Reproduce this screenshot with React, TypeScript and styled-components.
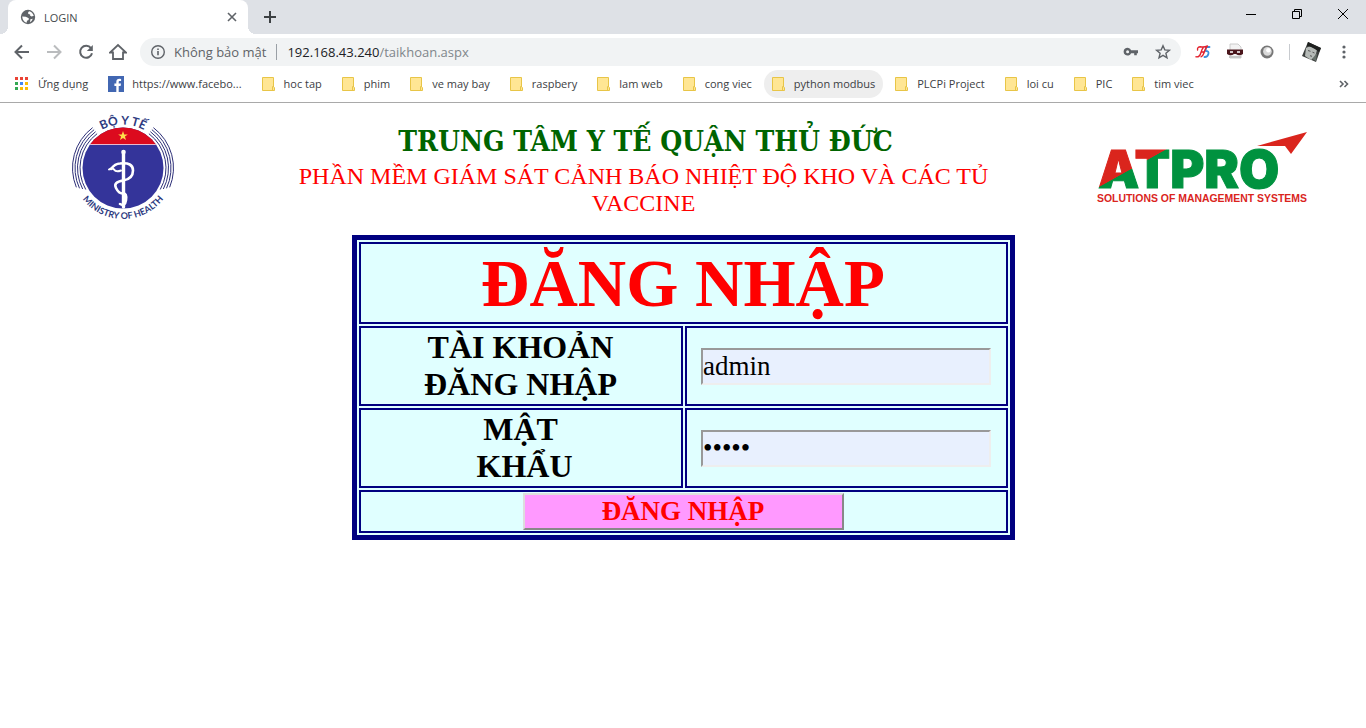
import React, { useState } from "react";
import styled, { createGlobalStyle } from "styled-components";

const UI_FONT = `"Open Sans", "Noto Sans", sans-serif`;
const SERIF = `"Liberation Serif", "Times New Roman", serif`;

const GlobalStyle = createGlobalStyle`
  *, *::before, *::after { box-sizing: border-box; }
  body { margin: 0; background: #fff; font-family: ${SERIF}; }
  button { font: inherit; color: inherit; border: 0; padding: 0; background: none; }
`;

/* ---------- browser frame ---------- */

const TabStrip = styled.div`
  display: flex;
  height: 34px;
  padding-left: 8px;
  background: #dee1e6;
  font-family: ${UI_FONT};
`;

const Tab = styled.div`
  position: relative;
  display: flex;
  align-items: center;
  width: 240px;
  padding: 0 9px 0 12px;
  border-radius: 8px 8px 0 0;
  background: #fff;
  color: #45494d;
  font-size: 11px;
  &::before, &::after {
    content: "";
    position: absolute;
    bottom: 0;
    width: 8px;
    height: 8px;
  }
  &::before {
    left: -8px;
    background: radial-gradient(circle at 0 0, #dee1e6 8px, #fff 8px);
  }
  &::after {
    right: -8px;
    background: radial-gradient(circle at 100% 0, #dee1e6 8px, #fff 8px);
  }
`;

const TabTitle = styled.span`
  flex: 1;
  margin-left: 8px;
`;

const IconButton = styled.button<{ $w?: number; $tone?: string }>`
  display: flex;
  align-items: center;
  justify-content: center;
  flex: none;
  width: ${(p) => p.$w ?? 32}px;
  height: 28px;
  color: ${(p) => p.$tone ?? "#5f6368"};
`;

const NewTab = styled(IconButton)`
  height: 34px;
  margin-left: 6px;
`;

const WindowControls = styled.div`
  display: flex;
  margin-left: auto;
`;

const Toolbar = styled.div`
  display: flex;
  align-items: center;
  height: 36px;
  padding: 0 6px;
  font-family: ${UI_FONT};
`;

const AddressBar = styled.div`
  display: flex;
  align-items: center;
  flex: 1;
  height: 28px;
  margin: 0 6px;
  padding: 0 2px 0 10px;
  border-radius: 14px;
  background: #f1f3f4;
  color: #5f6368;
  font-size: 13px;
`;

const Security = styled.span`
  margin-left: 8px;
  padding-right: 10px;
  border-right: 1px solid #9aa0a6;
  line-height: 16px;
`;

const Url = styled.span`
  flex: 1;
  margin-left: 10px;
  color: #80868b;
  b { font-weight: 400; color: #202124; }
`;

const Divider = styled.span`
  width: 1px;
  height: 16px;
  margin: 0 6px;
  background: #c8cbcf;
`;

const BookmarkBar = styled.nav`
  display: flex;
  align-items: center;
  gap: 4px;
  height: 33px;
  padding: 0 6px 4px 6px;
  border-bottom: 1px solid #a9a9a9;
  font-family: ${UI_FONT};
  font-size: 11px;
`;

const Bookmark = styled.a<{ $active?: boolean }>`
  display: flex;
  align-items: center;
  gap: 8px;
  flex: none;
  height: 28px;
  padding: 0 8px;
  border-radius: 14px;
  background: ${(p) => (p.$active ? "#eee" : "transparent")};
  color: #3c4043;
  line-height: 14px;
  text-decoration: none;
  white-space: nowrap;
`;

const More = styled(IconButton)`
  margin-left: auto;
`;

/* ---------- page ---------- */

const Header = styled.header`
  display: grid;
  grid-template-columns: 18fr 58fr 24fr;
  justify-items: center;
  height: 132px;
  padding-top: 11px;
`;

const Titles = styled.div`
  padding: 7px 0 0 3px;
  text-align: center;
`;

const Center = styled.h1`
  margin: 0;
  padding-left: 4px;
  color: #006400;
  font-family: "DejaVu Serif Condensed", "DejaVu Serif", serif;
  font-size: 28px;
  line-height: 42px;
`;

const Product = styled.p`
  margin: 0;
  color: #f00;
  font-size: 24px;
  line-height: 27px;
`;

const Company = styled.div`
  padding-top: 16px;
`;

const LoginTable = styled.table`
  width: 663px;
  max-width: 100%;
  margin: 0 auto;
  border: 5px solid #000080;
  border-spacing: 2px;
  background: #e0ffff;
  table-layout: fixed;
  th, td {
    padding: 1px;
    border: 2px solid #000080;
    text-align: center;
  }
`;

const LabelColumn = styled.col`
  width: 324px;
`;

const Heading = styled.th`
  color: #f00;
  font-size: 67px;
  line-height: 76px;
`;

const Field = styled.th`
  font-size: 32px;
  line-height: 37px;
`;

const TextBox = styled.input`
  width: 290px;
  height: 37px;
  padding: 0;
  border: 2px solid;
  border-color: #999 #eee #eee #999;
  background: #e8f0fe;
  color: #000;
  font-family: ${SERIF};
  font-size: 27px;
  vertical-align: middle;
  outline: 0;
`;

const Submit = styled.button`
  display: block;
  width: 321px;
  height: 37px;
  margin: 0 auto;
  border: 2px solid;
  border-color: #ddd #888 #888 #ddd;
  background: #f9f;
  color: #f00;
  font-family: ${SERIF};
  font-size: 27px;
  font-weight: 700;
  line-height: 31px;
`;

/* ---------- drawings ---------- */

const Stroke = ({ d, size = 16, w = 2 }: { d: string; size?: number; w?: number }) => (
  <svg width={size} height={size} viewBox={`0 0 ${size} ${size}`} fill="none" stroke="currentColor" strokeWidth={w}>
    <path d={d} />
  </svg>
);

const Globe = () => (
  <svg width="16" height="16" viewBox="0 0 16 16">
    <circle cx="8" cy="8" r="7.2" fill="#5f6368" />
    <path d="M9 2.2Q12.600 3 13.800 6.800L11.600 7.400 10 6.600 10.200 5.400 8.400 5 8 3.800Z" fill="#fff" />
    <path d="M2.200 7.400 5.800 7.800 8.800 9.200 8.600 11 7 11.800 6.600 13.800Q2.600 12.400 2.200 7.400Z" fill="#fff" />
    <path d="M10.400 10.200 12.800 9.800Q12 12.200 10 13.200Z" fill="#fff" />
  </svg>
);

const Folder = () => (
  <svg width="14" height="16" viewBox="0 0 14 16">
    <path d="M.5 1.5h11v9.5l1 .6v2.9H.5z" fill="#ffe694" stroke="#e8c547" />
    <path d="M10.5 14v-3l1-1.5v-1" fill="none" stroke="#e8c547" />
  </svg>
);

const AppsGrid = () => {
  const colors = ["#ea4335", "#ea4335", "#ea4335", "#34a853", "#4285f4", "#fbbc05", "#34a853", "#fbbc05", "#fbbc05"];
  return (
    <svg width="16" height="16" viewBox="0 0 16 16">
      {colors.map((c, i) => (
        <rect key={i} x={1 + (i % 3) * 5} y={1 + Math.floor(i / 3) * 5} width="3" height="3" fill={c} />
      ))}
    </svg>
  );
};

const Facebook = () => (
  <svg width="16" height="16" viewBox="0 0 16 16">
    <path fill="#4267b2" d="M0 0h16v16H0z" />
    <path fill="#fff" d="M8.3 16V10H6.4V7.6h1.9V6c0-2.2 1.2-3.2 3.1-3.2l1.7.1v2.2h-1.2c-1 0-1.2.5-1.2 1.2v1.3H13L12.6 10h-1.9v6z" />
  </svg>
);

const Info = () => (
  <svg width="16" height="16" viewBox="0 0 16 16" fill="none" stroke="#5f6368">
    <circle cx="8" cy="8" r="6.3" strokeWidth="1.4" />
    <path d="M8 7v4.2M8 4.4v1.7" strokeWidth="1.6" />
  </svg>
);

const Key = () => (
  <svg width="16" height="16" viewBox="0 0 16 16" fill="#5f6368">
    <path fillRule="evenodd" d="M8.1 6.2H15v3h-1.2v2.1h-2.6V9.2H8.1A3.9 3.9 0 1 1 8.1 6.2ZM4.6 6.2a1.5 1.5 0 1 0 0 3 1.5 1.5 0 0 0 0-3Z" />
  </svg>
);

const Reload = () => (
  <svg width="18" height="18" viewBox="0 0 18 18" fill="none" stroke="currentColor" strokeWidth="2">
    <path d="M14 5.2A6 6 0 1 0 15 10.2" />
    <path d="M15.8 2v6h-6z" fill="currentColor" stroke="none" />
  </svg>
);

const Star = () => (
  <svg width="18" height="18" viewBox="0 0 18 18" fill="none" stroke="#5f6368" strokeWidth="1.4">
    <path d="m9 2.7 1.8 4.2 4.6.4-3.5 3 1.1 4.5L9 12.4l-4 2.4 1.1-4.5-3.5-3 4.6-.4z" />
  </svg>
);

const ScriptExtension = () => (
  <svg width="18" height="16" viewBox="0 0 18 16" fill="none" strokeLinecap="round">
    <path d="M11.500 3h4M12 3.500 11.500 6.800Q15.200 6.800 14.400 10T10.500 13" stroke="#3b8fdc" strokeWidth="1.800" />
    <path d="M3.600 6Q3 2.800 6.500 2.800 10 3.600 13.500 2M9.500 3.200Q7.800 5 6.800 9 5.600 13.400 2 12.800M12.800 2.600Q10.800 6 9.800 9.200 8.800 12.200 7 12.800M7.500 8h3" stroke="#e3202c" strokeWidth="1.400" />
  </svg>
);

const MaskExtension = () => (
  <svg width="18" height="18" viewBox="0 0 18 18">
    <path d="M4 1h8l3 3v11H4z" fill="#f3f3f3" stroke="#ccc" />
    <path d="M3 13h12v2H3z" fill="#c5c5c5" />
    <path d="M1 6.500h16v4.500q-4 2.500-7 0H8q-3 2.500-7 0z" fill="#4a161c" />
    <path d="M4 9h3M11 9h3" stroke="#fff" strokeWidth="1.6" />
  </svg>
);

const RingExtension = () => (
  <svg width="16" height="16" viewBox="0 0 16 16">
    <circle cx="8" cy="8" r="6.5" fill="#777" />
    <circle cx="8.4" cy="7.4" r="4.3" fill="#d9d9d9" />
    <circle cx="9.4" cy="6.2" r="2.2" fill="#fff" />
  </svg>
);

const Avatar = () => (
  <svg width="20" height="20" viewBox="0 0 20 20">
    <path d="M6 0 19 6 14 20 0 14z" fill="#3c3f3e" />
    <path d="M4 6 8 4l7 4-2 7-4 3-6-4z" fill="#b5bab7" />
    <path d="M5 4 6 0l13 6-2 4-4-3-4-2z" fill="#1e201f" />
    <path d="m6 8.500 2.500.800M10.500 10.200l2 .8M8 13.700l2 .6" stroke="#555" />
    <path d="M10 17 15 11 14 19z" fill="#66706a" />
  </svg>
);

const Dots = () => (
  <svg width="4" height="16" viewBox="0 0 4 16" fill="#5f6368">
    <circle cx="2" cy="3" r="1.6" />
    <circle cx="2" cy="8" r="1.6" />
    <circle cx="2" cy="13" r="1.6" />
  </svg>
);

const Emblem = styled.svg`
  overflow: visible;
`;

const ring = (r: number) => {
  const p = (deg: number) => {
    const a = (deg * Math.PI) / 180;
    return `${55 + r * Math.cos(a)} ${54 + r * Math.sin(a)}`;
  };
  const low = 30 - (r - 43);
  return `M${p(-53)}A${r} ${r} 0 0 1 ${p(low)}M${p(180 - low)}A${r} ${r} 0 0 1 ${p(233)}`;
};

const HealthLogo = () => (
  <Emblem width="110" height="110" viewBox="0 0 110 110" role="img" aria-label="Bộ Y Tế, Ministry of Health">
    <defs>
      <clipPath id="disc"><circle cx="55" cy="54" r="40.5" /></clipPath>
      <path id="topArc" d="M11.500 54a43.500 43.500 0 0 1 87 0" />
      <path id="bottomArc" d="M4 54a51 51 0 0 0 102 0" />
    </defs>
    <g clipPath="url(#disc)">
      <path d="M0 0h110v110H0z" fill="#34349a" />
      <path d="M0 0h110v30H0z" fill="#dc0a1e" />
      <path d="M0 30.500h110" stroke="#e9b8cb" />
    </g>
    <g fill="none" stroke="#2d2f78" strokeWidth="1">
      {[43, 45.5, 48, 50.5].map((r) => <path key={r} d={ring(r)} />)}
    </g>
    <path d="m55 17 1.200 3.400h3.600l-2.900 2.200 1.100 3.500-3-2.100-3 2.100 1.100-3.500-2.900-2.200h3.600z" fill="#ffe04a" />
    <g fill="none" stroke="#fff" strokeLinecap="round">
      <path d="M55.500 39v54" strokeWidth="3.400" />
      <circle cx="55.500" cy="38" r="1.300" strokeWidth="2" />
      <path d="M43 55Q47 49.500 52 49.500Q65 48 65 56.500T55 66.500T48 74T55 79.500T58 86T52 90" strokeWidth="2.600" />
      <path d="M41 55.500q3-2 5 0 2 3 7 1" strokeWidth="2" />
    </g>
    <g fill="#2d3a80" fontFamily="Lato, sans-serif" fontWeight="700" textAnchor="middle">
      <text fontSize="12"><textPath href="#topArc" startOffset="50%">BỘ Y TẾ</textPath></text>
      <text fontSize="9"><textPath href="#bottomArc" startOffset="50%">MINISTRY OF HEALTH</textPath></text>
    </g>
  </Emblem>
);

const AtproLogo = () => (
  <Emblem width="216" height="76" viewBox="0 0 216 76" role="img" aria-label="ATPRO Solutions of Management Systems">
    <defs>
      <linearGradient id="split" gradientUnits="userSpaceOnUse" x1="38" y1="38.200" x2="38.280" y2="38.700">
        <stop offset="0" stopColor="#da251d" />
        <stop offset="1" stopColor="#00923f" />
      </linearGradient>
    </defs>
    <text x="4" y="58" fill="url(#split)" stroke="url(#split)" strokeWidth="1" fontFamily="Inter, sans-serif" fontWeight="900" fontSize="52">
      ATPRO
    </text>
    <path d="M163 16 213 2 197 24 191 16z" fill="#da251d" />
    <text x="3" y="72" fill="#da251d" fontFamily="Liberation Sans, Arial, sans-serif" fontWeight="700" fontSize="10.450">
      SOLUTIONS OF MANAGEMENT SYSTEMS
    </text>
  </Emblem>
);

const folders = [
  "hoc tap", "phim", "ve may bay", "raspbery", "lam web", "cong viec",
  "python modbus", "PLCPi Project", "loi cu", "PIC", "tim viec",
];

export default function App() {
  const [user, setUser] = useState("admin");
  const [password, setPassword] = useState("admin");

  return (
    <>
      <GlobalStyle />
      <TabStrip>
        <Tab>
          <Globe />
          <TabTitle>LOGIN</TabTitle>
          <IconButton $w={14} aria-label="Close tab"><Stroke size={10} w={1.6} d="M1 1l8 8M9 1 1 9" /></IconButton>
        </Tab>
        <NewTab aria-label="New tab" $tone="#3c4043"><Stroke size={12} d="M6 0v12M0 6h12" /></NewTab>
        <WindowControls>
          <IconButton $w={46} $tone="#000" aria-label="Minimize"><Stroke size={10} w={1} d="M0 5.500h10" /></IconButton>
          <IconButton $w={46} $tone="#000" aria-label="Restore"><Stroke size={10} w={1} d="M.5 2.500h7v7h-7zM2.500 2.500v-2h7v7h-2" /></IconButton>
          <IconButton $w={46} $tone="#000" aria-label="Close"><Stroke size={12} w={1} d="M1 1l10 10M11 1 1 11" /></IconButton>
        </WindowControls>
      </TabStrip>

      <Toolbar>
        <IconButton aria-label="Back"><Stroke d="M15 8H2M8 1.500 1.500 8 8 14.500" /></IconButton>
        <IconButton $tone="#babcbe" aria-label="Forward"><Stroke d="M1 8h13M8 1.500 14.500 8 8 14.500" /></IconButton>
        <IconButton aria-label="Reload"><Reload /></IconButton>
        <IconButton aria-label="Home"><Stroke size={18} d="M1 9.500h3v6.500h10V9.500h3L9 2z" w={1.8} /></IconButton>
        <AddressBar>
          <Info />
          <Security>Không bảo mật</Security>
          <Url><b>192.168.43.240</b>/taikhoan.aspx</Url>
          <IconButton aria-label="Saved passwords"><Key /></IconButton>
          <IconButton aria-label="Bookmark"><Star /></IconButton>
        </AddressBar>
        <IconButton aria-label="Script extension"><ScriptExtension /></IconButton>
        <IconButton aria-label="Mask extension"><MaskExtension /></IconButton>
        <IconButton aria-label="Ring extension"><RingExtension /></IconButton>
        <Divider />
        <IconButton aria-label="Profile"><Avatar /></IconButton>
        <IconButton aria-label="Menu"><Dots /></IconButton>
      </Toolbar>

      <BookmarkBar>
        <Bookmark href="#apps"><AppsGrid />Ứng dụng</Bookmark>
        <Bookmark href="#facebook"><Facebook />https://www.facebo...</Bookmark>
        {folders.map((name) => (
          <Bookmark key={name} href="#folder" $active={name === "python modbus"}><Folder />{name}</Bookmark>
        ))}
        <More aria-label="More bookmarks"><Stroke size={10} w={1.6} d="M1 2l3 3-3 3M5.500 2l3 3-3 3" /></More>
      </BookmarkBar>

      <Header>
        <HealthLogo />
        <Titles>
          <Center>TRUNG TÂM Y TẾ QUẬN THỦ ĐỨC</Center>
          <Product>PHẦN MỀM GIÁM SÁT CẢNH BÁO NHIỆT ĐỘ KHO VÀ CÁC TỦ VACCINE</Product>
        </Titles>
        <Company><AtproLogo /></Company>
      </Header>

      <form onSubmit={(e) => e.preventDefault()}>
        <LoginTable>
          <colgroup>
            <LabelColumn />
            <col />
          </colgroup>
          <tbody>
            <tr><Heading colSpan={2}>ĐĂNG NHẬP</Heading></tr>
            <tr>
              <Field scope="row"><label htmlFor="user">TÀI KHOẢN<br />ĐĂNG NHẬP</label></Field>
              <td><TextBox id="user" value={user} onChange={(e) => setUser(e.target.value)} /></td>
            </tr>
            <tr>
              <Field scope="row"><label htmlFor="password">MẬT<br />&nbsp;KHẨU</label></Field>
              <td><TextBox id="password" type="password" value={password} onChange={(e) => setPassword(e.target.value)} /></td>
            </tr>
            <tr><td colSpan={2}><Submit type="submit">ĐĂNG NHẬP</Submit></td></tr>
          </tbody>
        </LoginTable>
      </form>
    </>
  );
}
